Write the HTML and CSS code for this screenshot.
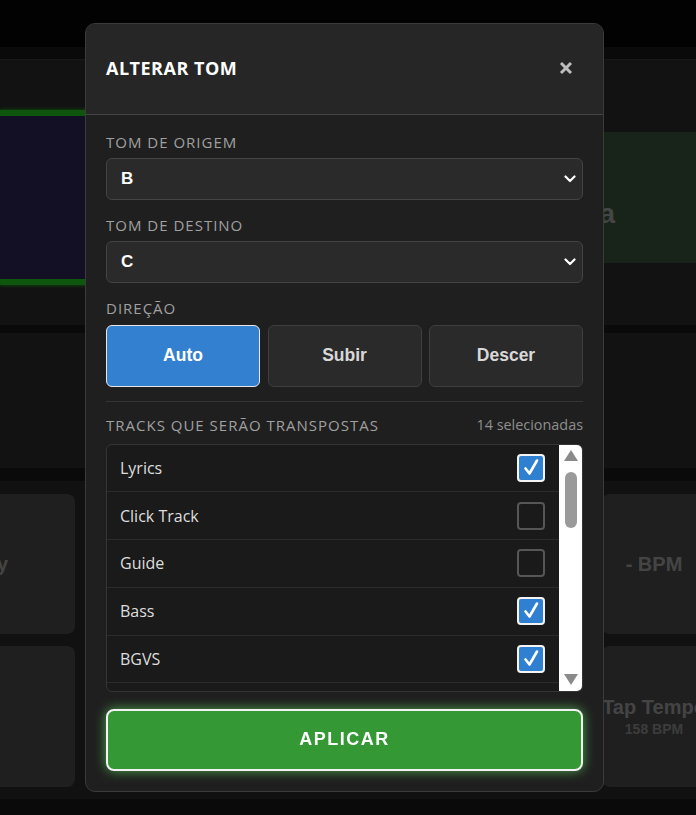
FILE: index.html
```html
<!DOCTYPE html>
<html lang="pt-BR">
<head>
<meta charset="utf-8">
<title>Alterar tom</title>
<link rel="stylesheet" href="styles.css">
</head>
<body>
<div class="app">
  <div class="topbar"></div>

  <section class="timeline">
    <div class="ruler"></div>
    <div class="lane">
      <div class="clip clip-song"></div>
      <div class="clip clip-next"><span>Sequência</span></div>
    </div>
  </section>

  <section class="mixer"></section>

  <section class="pads">
    <div class="pad"><strong>Play</strong></div>
    <div class="pad pad-wide"></div>
    <div class="pad pad-wide"></div>
    <div class="pad"><strong>- BPM</strong></div>
    <div class="pad"></div>
    <div class="pad"><strong>Tap Tempo</strong><small>158 BPM</small></div>
  </section>
</div>

<div class="backdrop">
  <div class="modal" role="dialog" aria-labelledby="modal-title">
    <div class="modal-head">
      <h2 id="modal-title">ALTERAR TOM</h2>
      <button class="close" aria-label="Fechar">
        <svg width="14" height="14" viewBox="0 0 14 14"><path d="M2 2 L12 12 M12 2 L2 12" stroke="currentColor" stroke-width="3" fill="none"/></svg>
      </button>
    </div>

    <div class="modal-body">
      <div class="field">
        <label class="field-label" for="tom-origem">TOM DE ORIGEM</label>
        <div class="select-wrap">
          <select id="tom-origem"><option>B</option></select>
          <svg class="chevron" width="12" height="8" viewBox="0 0 12 8"><path d="M1.5 1.5 L6 6 L10.5 1.5" stroke="#fff" stroke-width="2.2" fill="none" stroke-linecap="round" stroke-linejoin="round"/></svg>
        </div>
      </div>

      <div class="field">
        <label class="field-label" for="tom-destino">TOM DE DESTINO</label>
        <div class="select-wrap">
          <select id="tom-destino"><option>C</option></select>
          <svg class="chevron" width="12" height="8" viewBox="0 0 12 8"><path d="M1.5 1.5 L6 6 L10.5 1.5" stroke="#fff" stroke-width="2.2" fill="none" stroke-linecap="round" stroke-linejoin="round"/></svg>
        </div>
      </div>

      <div class="field field-dir">
        <span class="field-label">DIREÇÃO</span>
        <div class="direction">
          <button class="dir active">Auto</button>
          <button class="dir">Subir</button>
          <button class="dir">Descer</button>
        </div>
      </div>

      <div class="tracks">
        <div class="tracks-head">
          <span class="field-label">TRACKS QUE SERÃO TRANSPOSTAS</span>
          <span class="count">14 selecionadas</span>
        </div>
        <div class="track-box">
          <ul class="track-list">
            <li class="track"><span>Lyrics</span><span class="check on"><svg viewBox="0 0 24 24"><path d="M6.5 12.5 L10.5 17.5 L18 4.5" /></svg></span></li>
            <li class="track"><span>Click Track</span><span class="check"></span></li>
            <li class="track"><span>Guide</span><span class="check"></span></li>
            <li class="track"><span>Bass</span><span class="check on"><svg viewBox="0 0 24 24"><path d="M6.5 12.5 L10.5 17.5 L18 4.5" /></svg></span></li>
            <li class="track"><span>BGVS</span><span class="check on"><svg viewBox="0 0 24 24"><path d="M6.5 12.5 L10.5 17.5 L18 4.5" /></svg></span></li>
            <li class="track"><span>Drums</span><span class="check on"><svg viewBox="0 0 24 24"><path d="M6.5 12.5 L10.5 17.5 L18 4.5" /></svg></span></li>
            <li class="track"><span>Keys</span><span class="check on"><svg viewBox="0 0 24 24"><path d="M6.5 12.5 L10.5 17.5 L18 4.5" /></svg></span></li>
            <li class="track"><span>Pad</span><span class="check on"><svg viewBox="0 0 24 24"><path d="M6.5 12.5 L10.5 17.5 L18 4.5" /></svg></span></li>
            <li class="track"><span>Synth</span><span class="check on"><svg viewBox="0 0 24 24"><path d="M6.5 12.5 L10.5 17.5 L18 4.5" /></svg></span></li>
            <li class="track"><span>Guitar 1</span><span class="check on"><svg viewBox="0 0 24 24"><path d="M6.5 12.5 L10.5 17.5 L18 4.5" /></svg></span></li>
            <li class="track"><span>Guitar 2</span><span class="check on"><svg viewBox="0 0 24 24"><path d="M6.5 12.5 L10.5 17.5 L18 4.5" /></svg></span></li>
            <li class="track"><span>Acoustic</span><span class="check on"><svg viewBox="0 0 24 24"><path d="M6.5 12.5 L10.5 17.5 L18 4.5" /></svg></span></li>
            <li class="track"><span>Piano</span><span class="check on"><svg viewBox="0 0 24 24"><path d="M6.5 12.5 L10.5 17.5 L18 4.5" /></svg></span></li>
            <li class="track"><span>Strings</span><span class="check on"><svg viewBox="0 0 24 24"><path d="M6.5 12.5 L10.5 17.5 L18 4.5" /></svg></span></li>
            <li class="track"><span>Choir</span><span class="check on"><svg viewBox="0 0 24 24"><path d="M6.5 12.5 L10.5 17.5 L18 4.5" /></svg></span></li>
            <li class="track"><span>Loop</span><span class="check on"><svg viewBox="0 0 24 24"><path d="M6.5 12.5 L10.5 17.5 L18 4.5" /></svg></span></li>
          </ul>
          <div class="scrollbar" aria-hidden="true">
            <span class="sb-arrow sb-up"></span>
            <span class="sb-rail"><span class="sb-thumb"></span></span>
            <span class="sb-arrow sb-down"></span>
          </div>
        </div>
      </div>

      <button class="apply">APLICAR</button>
    </div>
  </div>
</div>
</body>
</html>
```

FILE: styles.css
```css
* {
  box-sizing: border-box;
}

html,
body {
  margin: 0;
  height: 100%;
  overflow: hidden;
  background: #181818;
}

body {
  font-family: "Open Sans", "Liberation Sans", sans-serif;
}

/* ---------- application behind the dialog ---------- */

.app {
  display: flex;
  flex-direction: column;
  height: 100%;
}

.topbar {
  height: 47px;
  background: #060606;
}

.timeline {
  margin-top: 12px;
  height: 266px;
  background: #282828;
  border-top: 1px solid #363636;
  display: flex;
  flex-direction: column;
}

.ruler {
  height: 50px;
}

.lane {
  height: 175px;
  display: flex;
  align-items: center;
  gap: 50px;
}

.clip-song {
  width: 380px;
  height: 100%;
  background: #2a2250;
  border-top: 6px solid #1fbf1f;
  border-bottom: 6px solid #1fbf1f;
  box-shadow: 0 0 4px #1fbf1f;
}

.clip-next {
  flex: 1;
  height: 131px;
  background: #354e3a;
  display: flex;
  align-items: center;
  padding: 32px 0 0 45px;
  font-family: "Liberation Sans", Arial, sans-serif;
  font-weight: 700;
  font-size: 28px;
  color: #9a9a9a;
  white-space: nowrap;
}

.mixer {
  margin-top: 8px;
  height: 135px;
  background: #282828;
}

.pads {
  margin-top: 13px;
  background: #262626;
  padding: 13px 0 12px;
  display: grid;
  grid-template-columns: 175px 235px 256px 104px;
  grid-template-rows: 140px 141px;
  gap: 12px;
  margin-left: -100px;
  width: 900px;
}

.pad {
  background: #454545;
  border-radius: 8px;
  display: flex;
  flex-direction: column;
  align-items: center;
  justify-content: center;
  font-family: "Liberation Sans", Arial, sans-serif;
  color: #989898;
  white-space: nowrap;
}

.pad strong {
  font-size: 20px;
}

.pad small {
  font-size: 14px;
  font-weight: 700;
  color: #858585;
  margin-top: 2px;
}

.pad-wide {
  grid-row: span 2;
}

/* ---------- dialog ---------- */

.backdrop {
  position: fixed;
  inset: 0;
  background: rgba(0, 0, 0, 0.55);
  display: flex;
  align-items: center;
  justify-content: center;
  padding: 0 7px 1px 0;
}

.modal {
  width: 519px;
  background: #1f1f1f;
  border: 1px solid #3b3b3b;
  border-radius: 10px;
  overflow: hidden;
}

.modal-head {
  height: 91px;
  background: #262626;
  border-bottom: 1px solid #444;
  display: flex;
  align-items: center;
  justify-content: space-between;
  padding: 0 3px 2px 20px;
}

.modal-head h2 {
  margin: 0;
  font-size: 18px;
  font-weight: 700;
  letter-spacing: 0.5px;
  color: #fff;
}

.close {
  width: 34px;
  height: 34px;
  border: 0;
  background: none;
  padding: 0;
  display: flex;
  align-items: center;
  justify-content: center;
  color: #bdbdbd;
  margin-right: 17px;
}

.modal-body {
  padding: 17px 20px 20px;
  display: flex;
  flex-direction: column;
}

.field {
  display: flex;
  flex-direction: column;
  margin-bottom: 15px;
}

.field-label {
  font-size: 15px;
  line-height: 20px;
  letter-spacing: 1px;
  color: #a0a0a0;
  margin-bottom: 6px;
}

.select-wrap {
  position: relative;
}

.select-wrap select {
  appearance: none;
  width: 100%;
  height: 42px;
  background: #2a2a2a;
  border: 1px solid #444;
  border-radius: 6px;
  padding: 0 14px;
  font-family: "Liberation Sans", Arial, sans-serif;
  font-weight: 700;
  font-size: 17px;
  color: #fff;
}

.chevron {
  position: absolute;
  right: 7px;
  top: 17px;
  pointer-events: none;
}

.field-dir {
  margin-bottom: 14px;
}

.field-dir .field-label {
  margin-bottom: 7px;
}

.direction {
  display: grid;
  grid-template-columns: repeat(3, 1fr);
  gap: 7.5px;
}

.dir {
  height: 62px;
  border-radius: 6px;
  background: #2a2a2a;
  border: 1px solid #3f3f3f;
  font-family: "Liberation Sans", Arial, sans-serif;
  font-weight: 700;
  font-size: 17.5px;
  color: #d8d8d8;
}

.dir.active {
  background: #3380d0;
  border-color: #e8e8e8;
  color: #fff;
}

.tracks {
  border-top: 1px solid #353535;
  padding-top: 13px;
}

.tracks-head {
  display: flex;
  justify-content: space-between;
  align-items: center;
  margin-bottom: 9px;
}

.tracks-head .field-label {
  margin-bottom: 0;
}

.count {
  font-size: 14.4px;
  line-height: 20px;
  color: #8e8e8e;
}

/* list box: rows plus a drawn scrollbar column */
.track-box {
  display: flex;
  height: 248px;
  border: 1px solid #353535;
  border-radius: 6px;
  background: #1a1a1a;
  overflow: hidden;
}

.track-list {
  flex: 1;
  list-style: none;
  margin: 0;
  padding: 0;
  overflow-y: auto;
  scrollbar-width: none;
}

.scrollbar {
  width: 23px;
  background: #fff;
  display: flex;
  flex-direction: column;
}

.sb-arrow {
  height: 22px;
  display: flex;
  align-items: center;
  justify-content: center;
}

.sb-arrow::before {
  content: "";
  width: 0;
  height: 0;
  border-left: 7.5px solid transparent;
  border-right: 7.5px solid transparent;
}

.sb-up::before {
  border-bottom: 11px solid #8a8a8a;
}

.sb-down::before {
  border-top: 11px solid #8a8a8a;
}

.sb-rail {
  flex: 1;
  padding: 5px 5px 0 6px;
}

.sb-thumb {
  display: block;
  height: 56px;
  border-radius: 6px;
  background: #9a9a9a;
}

.track {
  height: 47.75px;
  border-bottom: 1px solid #2c2c2c;
  display: flex;
  align-items: center;
  justify-content: space-between;
  padding: 0 14px 0 13px;
  font-size: 16px;
  color: #dedede;
}

.check {
  width: 28px;
  height: 28px;
  border: 2px solid #565656;
  border-radius: 4px;
  display: flex;
  align-items: center;
  justify-content: center;
}

.check.on {
  background: #3080d2;
  border-color: #f4f4f4;
}

.check svg {
  width: 24px;
  height: 24px;
  fill: none;
  stroke: #fff;
  stroke-width: 2.6;
  stroke-linecap: round;
  stroke-linejoin: round;
}

.apply {
  margin-top: 17px;
  height: 62px;
  background: #349934;
  border: 2px solid #f2f2f2;
  border-radius: 8px;
  box-shadow: 0 0 12px rgba(110, 255, 110, 0.6);
  font-family: "Liberation Sans", Arial, sans-serif;
  font-weight: 700;
  font-size: 18px;
  letter-spacing: 1.5px;
  color: #fff;
}
```
